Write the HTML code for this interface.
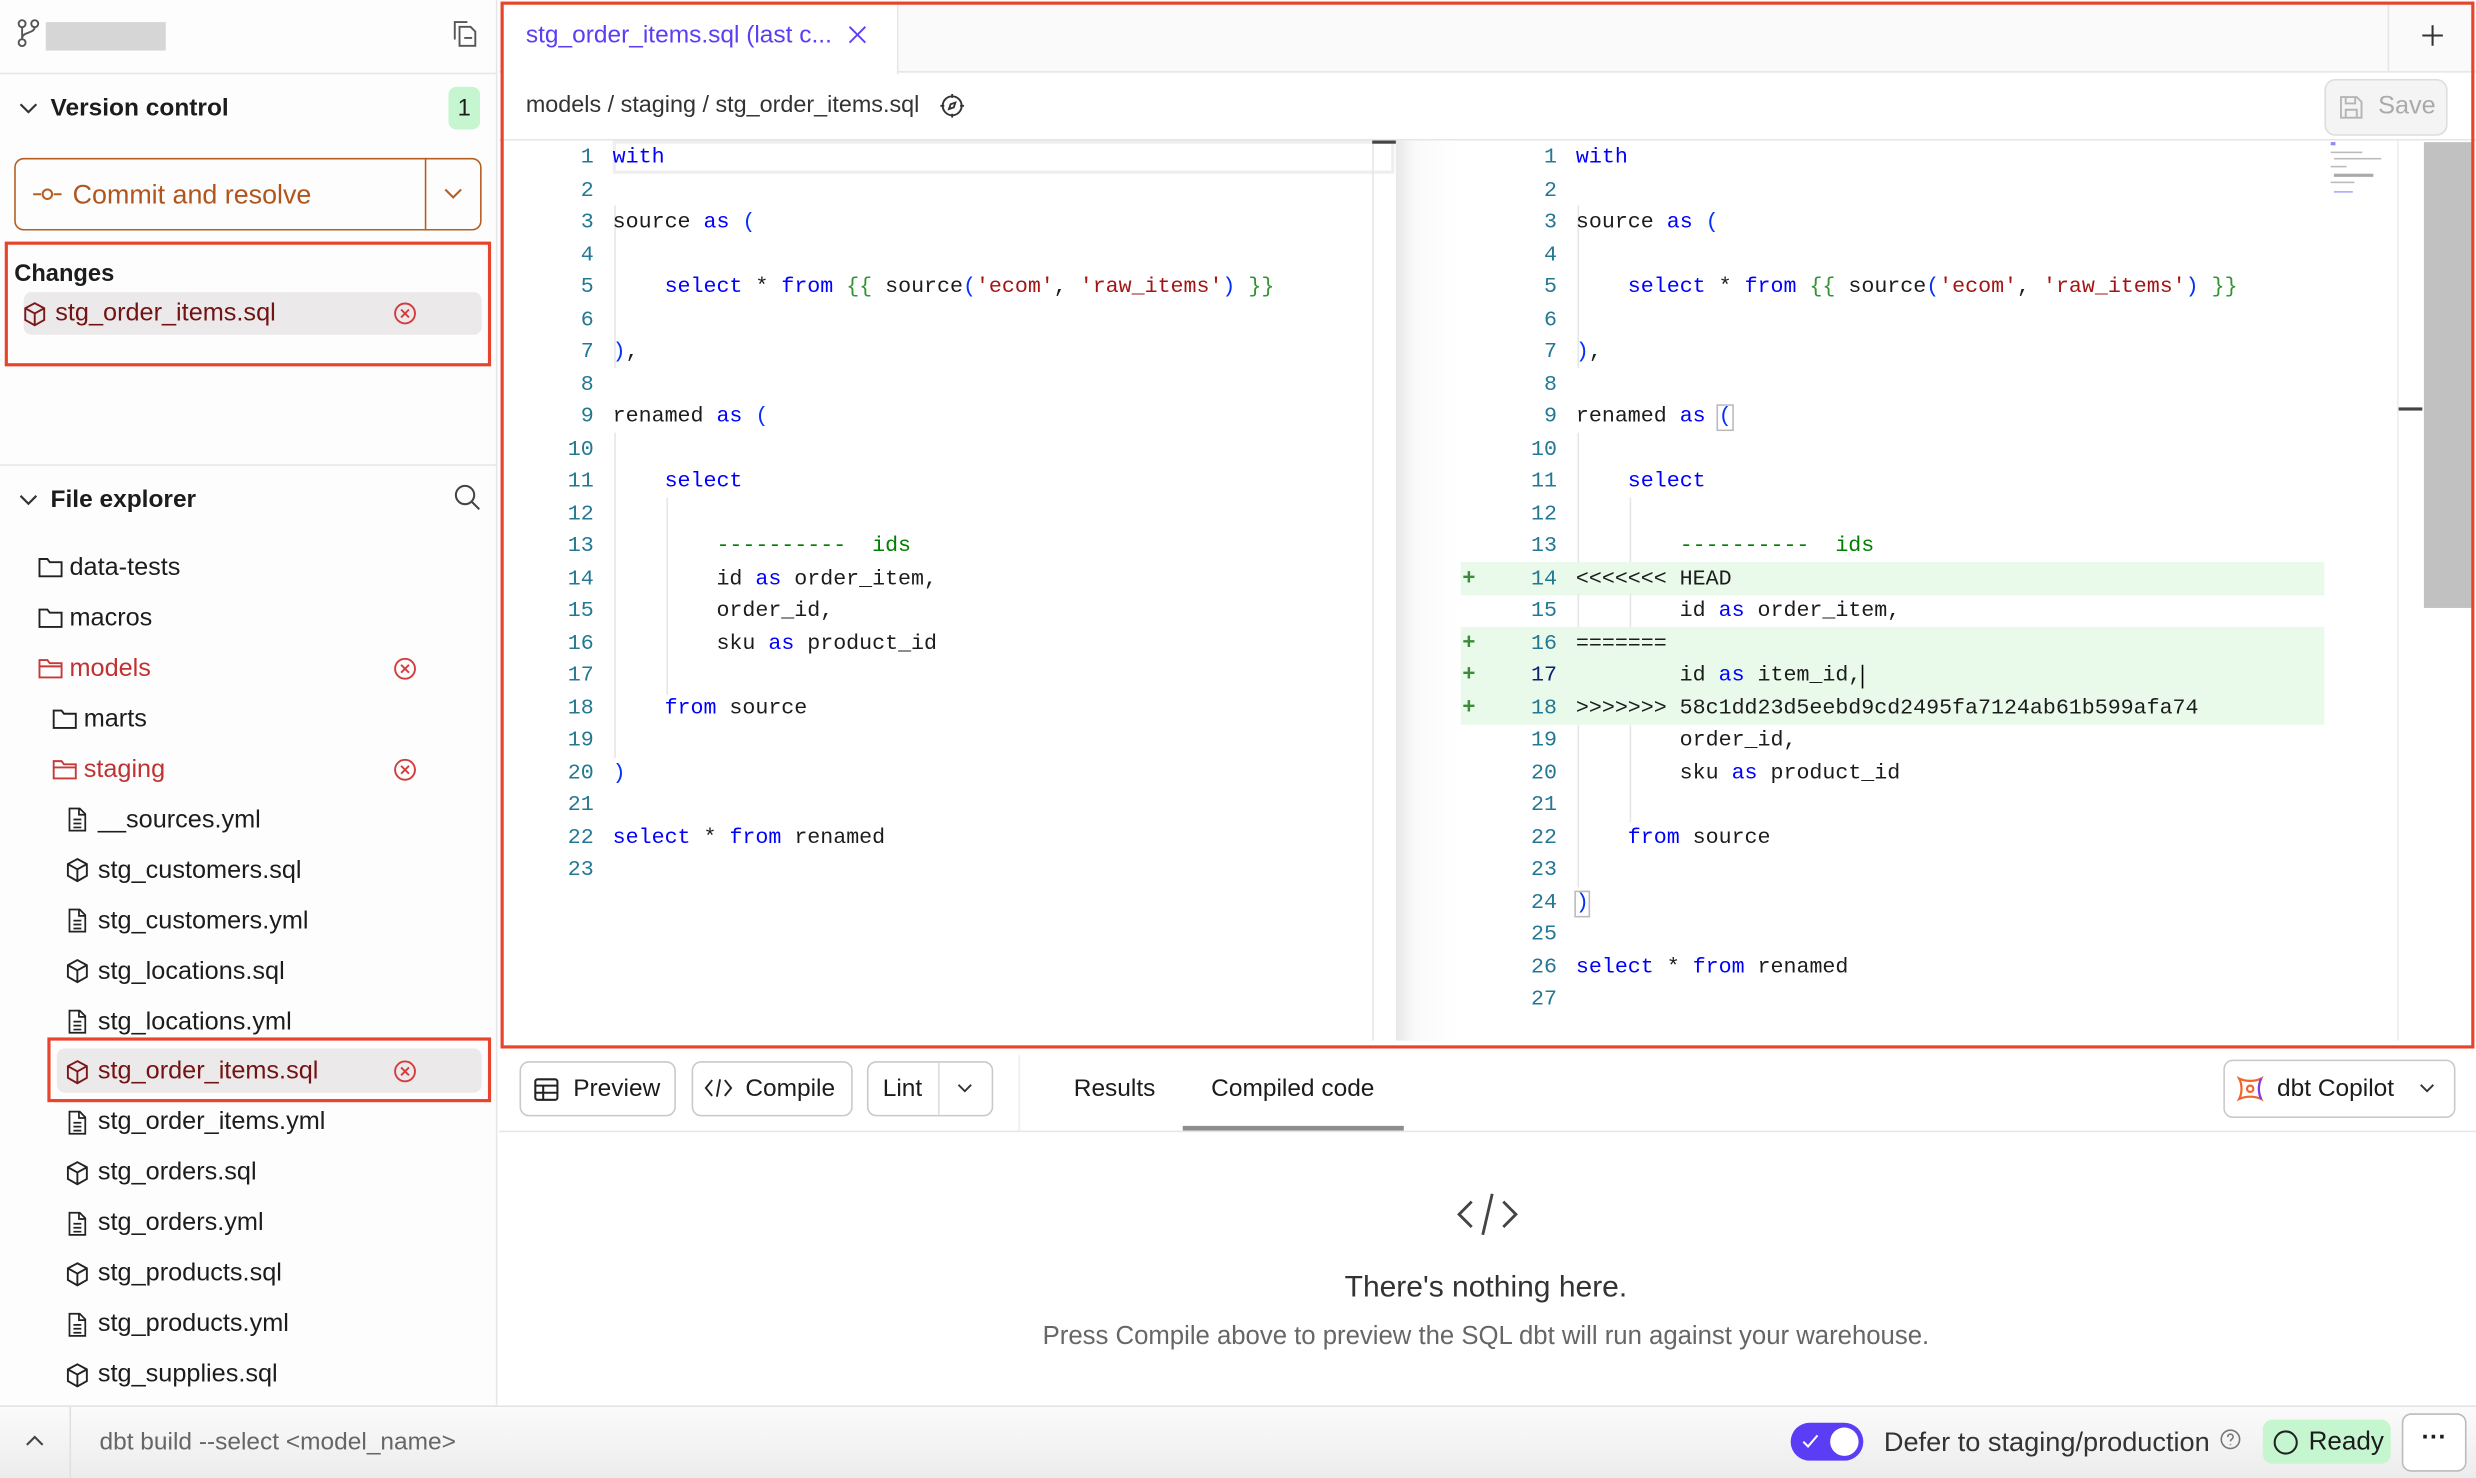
<!DOCTYPE html>
<html><head><meta charset="utf-8">
<style>
*{box-sizing:border-box;margin:0;padding:0}
html,body{width:2476px;height:1478px;overflow:hidden;background:#fff}
#s{position:absolute;left:0;top:0;width:1568px;height:936px;transform:scale(1.57908);transform-origin:0 0;font-family:"Liberation Sans",sans-serif;color:#1c1c1c;background:#fff}
.a{position:absolute}
.t{position:absolute;font-size:15px;white-space:nowrap;line-height:20px}
.tr{font-size:16px}
.code{position:absolute;font-family:"Liberation Mono",monospace;font-size:13.7px;white-space:pre;line-height:20.5px}
.k{color:#0000ff}.s{color:#a31515}.g{color:#319331}.c{color:#008000}.p{color:#0431fa}
svg{position:absolute}
.btn{position:absolute;border:1px solid #c9c9c9;border-radius:6px;background:#fff;font-size:15px}
.pl{position:absolute;left:926px;font-family:"Liberation Mono",monospace;font-size:14px;color:#3c8a3c;font-weight:bold;line-height:20.5px}
</style></head><body><div id="s">

<div class="a" style="left:0;top:0;width:315px;height:890px;background:#fdfdfd;border-right:1px solid #e6e6e6"></div>
<svg style="left:10px;top:12px" width="16" height="18" viewBox="0 0 16 18" fill="none" stroke="#555" stroke-width="1.2"><circle cx="4" cy="3" r="2.2"/><circle cx="12" cy="3" r="2.2"/><circle cx="4" cy="15" r="2.2"/><path d="M4 5.2v7.6M12 5.2c0 4-8 3-8 7"/></svg>
<div class="a" style="left:29px;top:14px;width:76px;height:18px;background:#d6d6d6"></div>
<svg style="left:286px;top:12px" width="18" height="19" viewBox="0 0 18 19" fill="none" stroke="#555" stroke-width="1.2"><path d="M2 13V2h8"/><path d="M5 5h7l3 3v9H5z"/><path d="M8 12h5"/></svg>
<div class="a" style="left:0;top:46px;width:315px;height:1px;background:#e6e6e6"></div>
<svg style="left:12px;top:65px" width="12" height="8" viewBox="0 0 12 8" fill="none" stroke="#333" stroke-width="1.4"><path d="M1 1l5 5 5-5"/></svg>
<div class="t" style="left:32px;top:59px;font-weight:bold;font-size:15.5px">Version control</div>
<div class="a" style="left:284px;top:55px;width:20px;height:27px;background:#c6f6cf;border-radius:5px;font-size:15px;text-align:center;line-height:27px">1</div>
<div class="a" style="left:9px;top:100px;width:296px;height:46px;border:1px solid #b65e22;border-radius:6px"></div>
<div class="a" style="left:269px;top:100px;width:1px;height:46px;background:#b65e22"></div>
<svg style="left:20px;top:117px" width="20" height="12" viewBox="0 0 20 12" fill="none" stroke="#b65e22" stroke-width="1.3"><path d="M1 6h5M14 6h5"/><circle cx="10" cy="6" r="3"/></svg>
<div class="t" style="left:46px;top:114px;color:#b0561c;font-size:17px">Commit and resolve</div>
<svg style="left:281px;top:119px" width="12" height="8" viewBox="0 0 12 8" fill="none" stroke="#b65e22" stroke-width="1.3"><path d="M1 1l5 5 5-5"/></svg>
<div class="a" style="left:3px;top:153px;width:308px;height:79px;border:2.5px solid #e8432b"></div>
<div class="t" style="left:9px;top:164px;font-weight:bold;font-size:15px">Changes</div>
<div class="a" style="left:15px;top:185px;width:290px;height:27px;background:#ebe9e9;border-radius:5px"></div>
<svg style="left:14px;top:191px" width="16" height="16" viewBox="0 0 16 16" fill="none" stroke="#7a1818" stroke-width="1.2"><path d="M8 1l6 3.2v7.4L8 15 2 11.6V4.2z"/><path d="M2 4.2L8 7.5l6-3.3M8 7.5V15"/></svg>
<div class="t tr" style="left:35px;top:189px;color:#731313">stg_order_items.sql</div>
<svg style="left:249px;top:191px" width="15" height="15" viewBox="0 0 15 15" fill="none" stroke="#d43b3b" stroke-width="1.2"><circle cx="7.5" cy="7.5" r="6.3"/><path d="M5 5l5 5M10 5l-5 5"/></svg>

<div class="a" style="left:0;top:294px;width:315px;height:1px;background:#e6e6e6"></div>
<svg style="left:12px;top:313px" width="12" height="8" viewBox="0 0 12 8" fill="none" stroke="#333" stroke-width="1.4"><path d="M1 1l5 5 5-5"/></svg>
<div class="t" style="left:32px;top:307px;font-weight:bold;font-size:15.5px">File explorer</div>
<svg style="left:287px;top:306px" width="18" height="18" viewBox="0 0 18 18" fill="none" stroke="#444" stroke-width="1.3"><circle cx="7.5" cy="7.5" r="5.8"/><path d="M12 12l4.5 4.5"/></svg>

<svg width="0" height="0"><defs>
<symbol id="fo" viewBox="0 0 16 14"><path d="M1 2h5l1.5 2H15v9H1z" fill="none" stroke="currentColor" stroke-width="1.2"/></symbol>
<symbol id="fr" viewBox="0 0 16 14"><path d="M1 2h5l1.5 2H15v9H1zM1 6h14" fill="none" stroke="currentColor" stroke-width="1.2"/></symbol>
<symbol id="doc" viewBox="0 0 14 16"><path d="M2 1h6.5L12 4.5V15H2zM8 1v4h4M4.5 8h5M4.5 10.5h5M4.5 13h5" fill="none" stroke="currentColor" stroke-width="1.1"/></symbol>
<symbol id="cube" viewBox="0 0 16 16"><path d="M8 1l6 3.2v7.4L8 15 2 11.6V4.2zM2 4.2L8 7.5l6-3.3M8 7.5V15" fill="none" stroke="currentColor" stroke-width="1.2"/></symbol>
<symbol id="x" viewBox="0 0 15 15"><circle cx="7.5" cy="7.5" r="6.3" fill="none" stroke="#d43b3b" stroke-width="1.2"/><path d="M5 5l5 5M10 5l-5 5" stroke="#d43b3b" stroke-width="1.2"/></symbol>
</defs></svg>
<svg style="left:24px;top:352px;color:#222" width="16" height="14"><use href="#fo"/></svg><div class="t tr" style="left:44px;top:350px">data-tests</div>
<svg style="left:24px;top:384px;color:#222" width="16" height="14"><use href="#fo"/></svg><div class="t tr" style="left:44px;top:382px">macros</div>
<svg style="left:24px;top:416px;color:#c83a3a" width="16" height="14"><use href="#fr"/></svg><div class="t tr" style="left:44px;top:414px;color:#c03232">models</div>
<svg style="left:249px;top:416px" width="15" height="15"><use href="#x"/></svg>
<svg style="left:33px;top:448px;color:#222" width="16" height="14"><use href="#fo"/></svg><div class="t tr" style="left:53px;top:446px">marts</div>
<svg style="left:33px;top:480px;color:#c83a3a" width="16" height="14"><use href="#fr"/></svg><div class="t tr" style="left:53px;top:478px;color:#c03232">staging</div>
<svg style="left:249px;top:480px" width="15" height="15"><use href="#x"/></svg>
<svg style="left:42px;top:511px;color:#222" width="14" height="16"><use href="#doc"/></svg><div class="t tr" style="left:62px;top:510px">__sources.yml</div>
<svg style="left:41px;top:543px;color:#222" width="16" height="16"><use href="#cube"/></svg><div class="t tr" style="left:62px;top:542px">stg_customers.sql</div>
<svg style="left:42px;top:575px;color:#222" width="14" height="16"><use href="#doc"/></svg><div class="t tr" style="left:62px;top:574px">stg_customers.yml</div>
<svg style="left:41px;top:607px;color:#222" width="16" height="16"><use href="#cube"/></svg><div class="t tr" style="left:62px;top:606px">stg_locations.sql</div>
<svg style="left:42px;top:639px;color:#222" width="14" height="16"><use href="#doc"/></svg><div class="t tr" style="left:62px;top:638px">stg_locations.yml</div>
<div class="a" style="left:30px;top:657px;width:281px;height:41px;border:2.5px solid #e8432b"></div>
<div class="a" style="left:36px;top:664px;width:269px;height:28px;background:#ebe9e9;border-radius:5px"></div>
<svg style="left:41px;top:671px;color:#7a1818" width="16" height="16"><use href="#cube"/></svg><div class="t tr" style="left:62px;top:669px;color:#731313">stg_order_items.sql</div>
<svg style="left:249px;top:671px" width="15" height="15"><use href="#x"/></svg>
<svg style="left:42px;top:703px;color:#222" width="14" height="16"><use href="#doc"/></svg><div class="t tr" style="left:62px;top:701px">stg_order_items.yml</div>
<svg style="left:41px;top:735px;color:#222" width="16" height="16"><use href="#cube"/></svg><div class="t tr" style="left:62px;top:733px">stg_orders.sql</div>
<svg style="left:42px;top:767px;color:#222" width="14" height="16"><use href="#doc"/></svg><div class="t tr" style="left:62px;top:765px">stg_orders.yml</div>
<svg style="left:41px;top:799px;color:#222" width="16" height="16"><use href="#cube"/></svg><div class="t tr" style="left:62px;top:797px">stg_products.sql</div>
<svg style="left:42px;top:831px;color:#222" width="14" height="16"><use href="#doc"/></svg><div class="t tr" style="left:62px;top:829px">stg_products.yml</div>
<svg style="left:41px;top:863px;color:#222" width="16" height="16"><use href="#cube"/></svg><div class="t tr" style="left:62px;top:861px">stg_supplies.sql</div>

<div class="a" style="left:316px;top:0;width:1252px;height:46px;background:#fafafa;border-bottom:1px solid #e6e6e6"></div>
<div class="a" style="left:319px;top:3px;width:250px;height:44px;background:#fff;border-right:1px solid #e6e6e6"></div>
<div class="t" style="left:333px;top:13px;color:#5b3df5;font-size:15.5px">stg_order_items.sql (last c...</div>
<svg style="left:537px;top:16px" width="12" height="12" viewBox="0 0 12 12" stroke="#5b3df5" stroke-width="1.2"><path d="M1 1l10 10M11 1L1 11"/></svg>
<div class="a" style="left:1512px;top:3px;width:1px;height:42px;background:#e6e6e6"></div>
<svg style="left:1533px;top:15px" width="15" height="15" viewBox="0 0 15 15" stroke="#333" stroke-width="1.3"><path d="M7.5 1v13M1 7.5h13"/></svg>
<div class="t" style="left:333px;top:57px;color:#333;font-size:14.8px">models / staging / stg_order_items.sql</div>
<svg style="left:595px;top:59px" width="16" height="16" viewBox="0 0 16 16" fill="none" stroke="#333" stroke-width="1.2"><circle cx="8" cy="8" r="6"/><path d="M8 0.5v2.5M8 13v2.5M0.5 8H3M13 8h2.5M10 6l-3 1-1 3 3-1z"/></svg>
<div class="a" style="left:1472px;top:50px;width:78px;height:36px;border:1px solid #ddd;border-radius:7px;background:#f4f4f4"></div>
<svg style="left:1481px;top:60px" width="16" height="16" viewBox="0 0 16 16" fill="none" stroke="#b5b5b5" stroke-width="1.2"><path d="M1.5 1.5h10l3 3v10h-13z"/><path d="M4.5 1.5v4h6v-4M4.5 14.5v-5h7v5"/></svg>
<div class="t" style="left:1506px;top:58px;color:#aaa;font-size:16px">Save</div>
<div class="a" style="left:316px;top:88px;width:1252px;height:1px;background:#e6e6e6"></div>

<div class="a" style="left:388px;top:89px;width:495px;height:21px;border:2px solid #eee"></div>
<div class="a" style="left:869px;top:89px;width:1px;height:570px;background:#e6e6e6"></div>
<div class="a" style="left:869px;top:89px;width:15px;height:2px;background:#444"></div>
<div class="a" style="left:884px;top:89px;width:40px;height:570px;background:linear-gradient(90deg,#e8e8e8,#fafafa 30%,#fff)"></div>
<div class="a" style="left:389px;top:130px;width:1px;height:103px;background:#e6e6e6"></div>
<div class="a" style="left:389px;top:274px;width:1px;height:206px;background:#e6e6e6"></div>
<div class="a" style="left:422px;top:315px;width:1px;height:125px;background:#e6e6e6"></div>
<div class="code" style="left:336px;top:91px;color:#237893;width:40px;text-align:right">1
2
3
4
5
6
7
8
9
10
11
12
13
14
15
16
17
18
19
20
21
22
23</div>
<div class="code" style="left:388px;top:91px"><span class="k">with</span>

source <span class="k">as</span> <span class="p">(</span>

    <span class="k">select</span> * <span class="k">from</span> <span class="g">{{</span> source<span class="p">(</span><span class="s">'ecom'</span>, <span class="s">'raw_items'</span><span class="p">)</span> <span class="g">}}</span>

<span class="p">)</span>,

renamed <span class="k">as</span> <span class="p">(</span>

    <span class="k">select</span>

        <span class="c">----------  ids</span>
        id <span class="k">as</span> order_item,
        order_id,
        sku <span class="k">as</span> product_id

    <span class="k">from</span> source

<span class="p">)</span>

<span class="k">select</span> * <span class="k">from</span> renamed
</div>

<div class="a" style="left:925px;top:356px;width:547px;height:20.5px;background:#e9f9ea"></div>
<div class="a" style="left:925px;top:397px;width:547px;height:61.5px;background:#e9f9ea"></div>
<div class="a" style="left:999px;top:130px;width:1px;height:103px;background:#e6e6e6"></div>
<div class="a" style="left:999px;top:274px;width:1px;height:82px;background:#e6e6e6"></div>
<div class="a" style="left:999px;top:376px;width:1px;height:21px;background:#e6e6e6"></div>
<div class="a" style="left:999px;top:459px;width:1px;height:103px;background:#e6e6e6"></div>
<div class="a" style="left:1032px;top:315px;width:1px;height:41px;background:#e6e6e6"></div>
<div class="a" style="left:1032px;top:376px;width:1px;height:21px;background:#e6e6e6"></div>
<div class="a" style="left:1032px;top:459px;width:1px;height:62px;background:#e6e6e6"></div>
<div class="pl" style="top:357px">+</div>
<div class="pl" style="top:398px">+</div>
<div class="pl" style="top:418px">+</div>
<div class="pl" style="top:439px">+</div>
<div class="code" style="left:946px;top:91px;color:#237893;width:40px;text-align:right">1
2
3
4
5
6
7
8
9
10
11
12
13
14
15
16
<span style="color:#0b216f">17</span>
18
19
20
21
22
23
24
25
26
27</div>
<div class="code" style="left:998px;top:91px"><span class="k">with</span>

source <span class="k">as</span> <span class="p">(</span>

    <span class="k">select</span> * <span class="k">from</span> <span class="g">{{</span> source<span class="p">(</span><span class="s">'ecom'</span>, <span class="s">'raw_items'</span><span class="p">)</span> <span class="g">}}</span>

<span class="p">)</span>,

renamed <span class="k">as</span> <span class="p" style="outline:1px solid #bbb">(</span>

    <span class="k">select</span>

        <span class="c">----------  ids</span>
&lt;&lt;&lt;&lt;&lt;&lt;&lt; HEAD
        id <span class="k">as</span> order_item,
=======
        id <span class="k">as</span> item_id,<span style="border-left:1.5px solid #000"></span>
&gt;&gt;&gt;&gt;&gt;&gt;&gt; 58c1dd23d5eebd9cd2495fa7124ab61b599afa74
        order_id,
        sku <span class="k">as</span> product_id

    <span class="k">from</span> source

<span class="p" style="outline:1px solid #bbb">)</span>

<span class="k">select</span> * <span class="k">from</span> renamed
</div>
<div class="a" style="left:1518px;top:89px;width:1px;height:570px;background:#eee"></div>
<div class="a" style="left:1519px;top:258px;width:15px;height:2px;background:#444"></div>
<div class="a" style="left:1535px;top:90px;width:31px;height:295px;background:#c1c1c1"></div>
<div class="a" style="left:1476px;top:90px;width:3px;height:2px;background:#88f"></div>
<div class="a" style="left:1476px;top:96px;width:20px;height:1px;background:#bbb"></div>
<div class="a" style="left:1478px;top:100px;width:30px;height:1px;background:#bbb"></div>
<div class="a" style="left:1476px;top:105px;width:10px;height:1px;background:#bbb"></div>
<div class="a" style="left:1478px;top:110px;width:25px;height:2px;background:#aaa"></div>
<div class="a" style="left:1476px;top:115px;width:15px;height:1px;background:#bbb"></div>
<div class="a" style="left:1478px;top:121px;width:12px;height:1px;background:#aaf"></div>

<div class="a" style="left:317px;top:1px;width:1250px;height:663px;border:2.5px solid #e8432b"></div>

<div class="btn" style="left:329px;top:672px;width:99px;height:35px"></div>
<svg style="left:338px;top:682px" width="16" height="16" viewBox="0 0 16 16" fill="none" stroke="#222" stroke-width="1.3"><rect x="1" y="1.5" width="14" height="13" rx="1.5"/><path d="M1 5.5h14M1 10h14M6 5.5v9"/></svg>
<div class="t" style="left:363px;top:680px;font-size:15.5px">Preview</div>
<div class="btn" style="left:438px;top:672px;width:102px;height:35px"></div>
<svg style="left:446px;top:683px" width="18" height="12" viewBox="0 0 18 12" fill="none" stroke="#222" stroke-width="1.2"><path d="M5 1L1 6l4 5M13 1l4 5-4 5M10 0.5L8 11.5"/></svg>
<div class="t" style="left:472px;top:680px;font-size:15.5px">Compile</div>
<div class="btn" style="left:549px;top:672px;width:80px;height:35px"></div>
<div class="a" style="left:594px;top:673px;width:1px;height:33px;background:#ddd"></div>
<div class="t" style="left:559px;top:680px;font-size:15.5px">Lint</div>
<svg style="left:606px;top:686px" width="10" height="7" viewBox="0 0 10 7" fill="none" stroke="#333" stroke-width="1.2"><path d="M1 1l4 4 4-4"/></svg>
<div class="a" style="left:645px;top:668px;width:1px;height:48px;background:#eee"></div>
<div class="t" style="left:680px;top:680px;font-size:15.5px">Results</div>
<div class="t" style="left:767px;top:680px;font-size:15.5px">Compiled code</div>
<div class="a" style="left:749px;top:713px;width:140px;height:3px;background:#8d8d8d"></div>
<div class="a" style="left:316px;top:716px;width:1252px;height:1px;background:#e6e6e6"></div>
<div class="btn" style="left:1408px;top:671px;width:147px;height:37px"></div>
<svg style="left:1416px;top:681px" width="18" height="17" viewBox="0 0 18 17" fill="none" stroke-width="1.4"><path d="M2 2c4 2 10 2 14 0-2 4-2 9 0 13-4-2-10-2-14 0 2-4 2-9 0-13z" stroke="#f0652a"/><path d="M16 2c-2 4-2 9 0 13" stroke="#7b3cf0"/><circle cx="9" cy="8.5" r="2" stroke="#f0652a"/></svg>
<div class="t" style="left:1442px;top:680px;font-size:15.5px">dbt Copilot</div>
<svg style="left:1532px;top:686px" width="10" height="7" viewBox="0 0 10 7" fill="none" stroke="#333" stroke-width="1.2"><path d="M1 1l4 4 4-4"/></svg>

<svg style="left:922px;top:755px" width="40" height="28" viewBox="0 0 40 28" fill="none" stroke="#444" stroke-width="1.8"><path d="M10 6L2 14l8 8M30 6l8 8-8 8M23 1l-6 26"/></svg>
<div class="t" style="left:0;width:1882px;text-align:center;top:806px;font-size:19px;color:#333">There's nothing here.</div>
<div class="t" style="left:0;width:1882px;text-align:center;top:836px;font-size:16.3px;color:#666">Press Compile above to preview the SQL dbt will run against your warehouse.</div>

<div class="a" style="left:0;top:890px;width:1568px;height:46px;background:linear-gradient(#fbfbfb,#ececec);border-top:1px solid #e3e3e3"></div>
<div class="a" style="left:44px;top:891px;width:1px;height:45px;background:#e0e0e0"></div>
<svg style="left:16px;top:909px" width="12" height="7" viewBox="0 0 12 7" fill="none" stroke="#444" stroke-width="1.3"><path d="M1 6l5-5 5 5"/></svg>
<div class="t" style="left:63px;top:904px;color:#666;font-size:15.5px">dbt build --select &lt;model_name&gt;</div>
<div class="a" style="left:1134px;top:901px;width:46px;height:24px;background:#5b3df5;border-radius:12px"></div>
<div class="a" style="left:1159px;top:904px;width:18px;height:18px;background:#fff;border-radius:50%"></div>
<svg style="left:1141px;top:908px" width="11" height="9" viewBox="0 0 11 9" fill="none" stroke="#fff" stroke-width="1.3"><path d="M1 5l3 3 6-7"/></svg>
<div class="t" style="left:1193px;top:903px;color:#333;font-size:17.2px">Defer to staging/production</div>
<svg style="left:1406px;top:905px" width="13" height="13" viewBox="0 0 13 13" fill="none" stroke="#777" stroke-width="1"><circle cx="6.5" cy="6.5" r="5.8"/><path d="M4.8 5a1.7 1.7 0 113 1c-.8.6-1.3.9-1.3 1.8M6.5 9.6v.6"/></svg>
<div class="a" style="left:1433px;top:899px;width:81px;height:28px;background:#c6f6cf;border-radius:6px"></div>
<svg style="left:1439px;top:905px" width="17" height="17" viewBox="0 0 17 17" fill="none" stroke="#222" stroke-width="1.3"><circle cx="8.5" cy="8.5" r="7"/></svg>
<div class="t" style="left:1462px;top:903px;font-size:16.5px">Ready</div>
<div class="a" style="left:1521px;top:895px;width:41px;height:37px;background:#fff;border:1px solid #bbb;border-radius:6px;text-align:center;font-size:16px;line-height:30px;font-weight:bold">···</div>
</div></body></html>
